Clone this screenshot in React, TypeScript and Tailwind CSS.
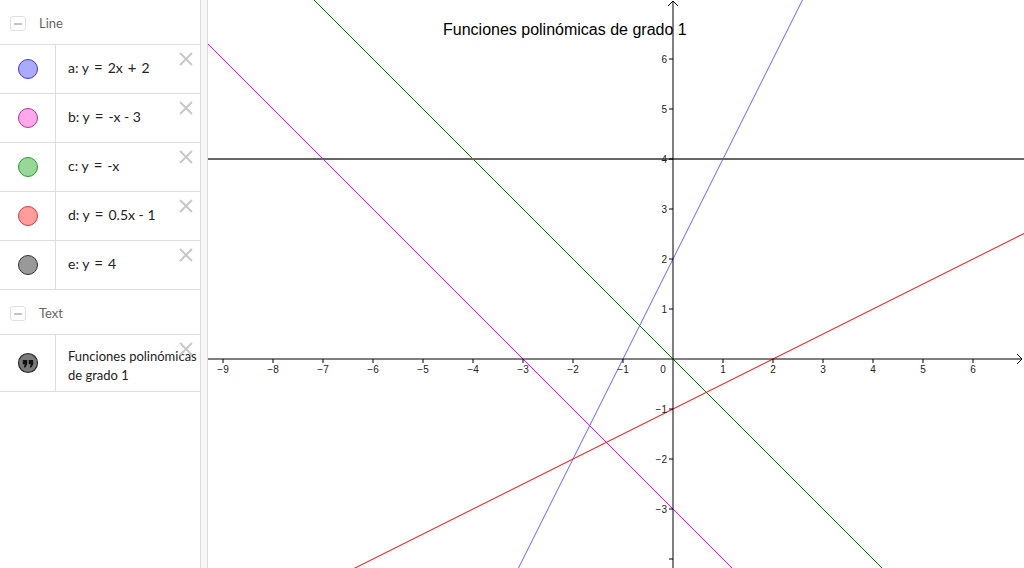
import React from 'react';

type LineItem = {
  label: string[];
  fill: string;
  stroke: string;
};

// label parts: math operators get a little extra room, like the original renderer
const items: LineItem[] = [
  { label: ['a: y', '=', '2x', '+', '2'], fill: '#aaaaff', stroke: '#3b3bde' },
  { label: ['b: y', '=', '-x - 3'], fill: '#ffa8ec', stroke: '#b2338f' },
  { label: ['c: y', '=', '-x'], fill: '#99d799', stroke: '#2c9a2c' },
  { label: ['d: y', '=', '0.5x - 1'], fill: '#ff9d9d', stroke: '#d43a3a' },
  { label: ['e: y', '=', '4'], fill: '#999999', stroke: '#333333' },
];

// graph view geometry
const W = 816;
const H = 568;
const OX = 465;
const OY = 359;
const S = 50;
const px = (x: number) => OX + x * S;
const py = (y: number) => OY - y * S;

const graphs: { f: (x: number) => number; color: string; width: number }[] = [
  { f: (x) => 2 * x + 2, color: '#6666ff', width: 1 },
  { f: (x) => -x - 3, color: '#ff00ff', width: 1 },
  { f: (x) => -x, color: '#008000', width: 1 },
  { f: (x) => 0.5 * x - 1, color: '#ff0000', width: 1 },
  { f: () => 4, color: '#666666', width: 2 },
];

const font = '"Lato", "DejaVu Sans", sans-serif';

function CloseIcon() {
  return (
    <svg width="16" height="16" viewBox="0 0 16 16" className="absolute right-[6px] top-[6px]">
      <path d="M2 2 L14 14 M14 2 L2 14" stroke="#c8c8c8" strokeWidth="2" />
    </svg>
  );
}

function GroupHeader({ title }: { title: string }) {
  return (
    <div className="flex h-[45px] items-center border-b border-[#dddddd] pl-[10px] pt-[3px]">
      <div className="flex h-[15px] w-[16px] items-center justify-center rounded-[3px] border border-[#e0e0e0]">
        <div className="h-[2px] w-[8px] bg-[#c4c4c4]" />
      </div>
      <span className="ml-[13px] text-[13px] text-[#666666]" style={{ fontFamily: font }}>
        {title}
      </span>
    </div>
  );
}

function Sidebar() {
  return (
    <div className="w-[200px] shrink-0 bg-white" style={{ fontFamily: font }}>
      <GroupHeader title="Line" />
      {items.map((it) => (
        <div key={it.label.join('')} className="relative flex h-[49px] border-b border-[#dddddd]">
          <div className="flex w-[56px] shrink-0 items-center justify-center border-r border-[#dddddd]">
            <div
              className="h-[20px] w-[20px] rounded-full border"
              style={{ backgroundColor: it.fill, borderColor: it.stroke }}
            />
          </div>
          <div className="flex items-center whitespace-pre pb-[3px] pl-[12px] text-[14px] text-[#222222]">
            {it.label.map((p, i) =>
              p === '=' || p === '+' ? (
                <span key={i} className="px-[5px] text-[15px]">
                  {p}
                </span>
              ) : (
                <span key={i}>{p}</span>
              )
            )}
          </div>
          <CloseIcon />
        </div>
      ))}
      <GroupHeader title="Text" />
      <div className="relative flex h-[57px] border-b border-[#dddddd]">
        <div className="flex w-[56px] shrink-0 items-center justify-center border-r border-[#dddddd]">
          <svg width="22" height="22" viewBox="0 0 22 22">
            <circle cx="11" cy="11" r="9.5" fill="#7a7a7a" stroke="#2a2a2a" strokeWidth="1.2" />
            <path d="M5.8 8 h4.4 v4.2 l-1.9 3.4 h-1.6 l1.1 -3.4 h-2 z" fill="#111111" />
            <path d="M11.8 8 h4.4 v4.2 l-1.9 3.4 h-1.6 l1.1 -3.4 h-2 z" fill="#111111" />
          </svg>
        </div>
        <div className="flex flex-col justify-center whitespace-nowrap pl-[12px] pt-[6px] text-[13px] leading-[19px] text-[#222222]">
          <span>Funciones polinómicas</span>
          <span>de grado 1</span>
        </div>
        <CloseIcon />
      </div>
    </div>
  );
}

function Graph() {
  const xTicks = [-9, -8, -7, -6, -5, -4, -3, -2, -1, 1, 2, 3, 4, 5, 6];
  const yTicks = [6, 5, 4, 3, 2, 1, -1, -2, -3];
  const fmt = (n: number) => (n < 0 ? `\u2212${-n}` : `${n}`);
  const axisFont = '"Liberation Sans", Arial, sans-serif';
  return (
    <div className="relative flex-1 overflow-hidden bg-white">
      <svg width={W} height={H} viewBox={`0 0 ${W} ${H}`} className="block">
        {/* functions */}
        {graphs.map((g, i) => (
          <line
            key={i}
            x1={px(-12)}
            y1={py(g.f(-12))}
            x2={px(10)}
            y2={py(g.f(10))}
            stroke={g.color}
            strokeWidth={g.width}
          />
        ))}
        {/* axes */}
        <line x1={0} y1={OY} x2={W - 2} y2={OY} stroke="#000" strokeWidth="1" />
        <line x1={OX} y1={1} x2={OX} y2={H} stroke="#000" strokeWidth="1" />
        <path d={`M${W - 7} ${OY - 5} L${W - 2} ${OY} L${W - 7} ${OY + 5}`} stroke="#000" fill="none" />
        <path d={`M${OX - 5} 6 L${OX} 1 L${OX + 5} 6`} stroke="#000" fill="none" />
        {xTicks.map((t) => (
          <g key={`x${t}`}>
            <line x1={px(t)} y1={OY} x2={px(t)} y2={OY + 4} stroke="#000" />
            <text x={px(t)} y={OY + 14} textAnchor="middle" fontSize="10" fill="#222" fontFamily={axisFont}>
              {fmt(t)}
            </text>
          </g>
        ))}
        <text x={OX - 10} y={OY + 14} textAnchor="middle" fontSize="10" fill="#222" fontFamily={axisFont}>
          0
        </text>
        {yTicks.map((t) => (
          <g key={`y${t}`}>
            <line x1={OX - 4} y1={py(t)} x2={OX} y2={py(t)} stroke="#000" />
            <text x={OX - 6} y={py(t) + 4} textAnchor="end" fontSize="10" fill="#222" fontFamily={axisFont}>
              {fmt(t)}
            </text>
          </g>
        ))}
        <line x1={OX - 4} y1={py(-4)} x2={OX} y2={py(-4)} stroke="#000" />
        <text x={235} y={35} fontSize="16" fill="#000" fontFamily={axisFont}>
          Funciones polinómicas de grado 1
        </text>
      </svg>
    </div>
  );
}

export default function App() {
  return (
    <div className="flex h-[568px] w-[1024px] overflow-hidden bg-white">
      <Sidebar />
      <div className="w-[8px] shrink-0 border-x border-[#dcdcdc] bg-[#f6f6f6]" />
      <Graph />
    </div>
  );
}
